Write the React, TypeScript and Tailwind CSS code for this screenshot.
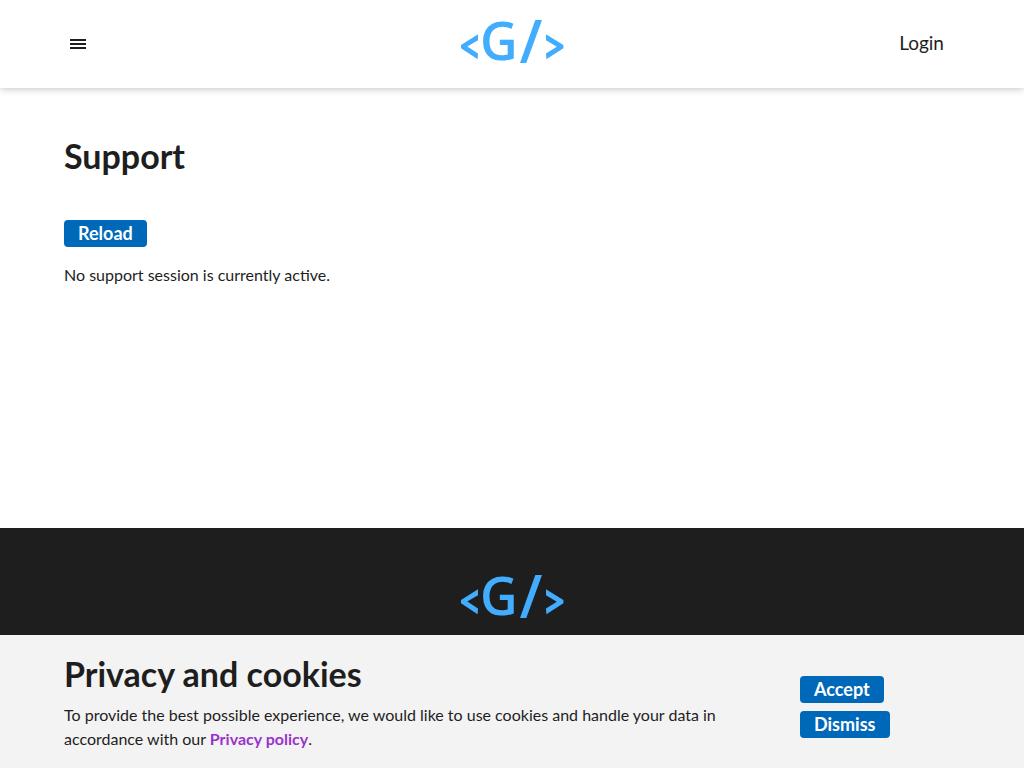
import React from 'react';

function Logo() {
  return (
    <svg width="104" height="44" viewBox="0 0 104 44" role="img" aria-label="Home" className="block overflow-visible fill-[#42adff]">
      <polygon points="18,14.3 18,20.2 7.3,26.5 18,33.4 17.6,39.2 1,28.2 1,25" />
      <text x="20" y="40" fontSize="52" fontWeight="600" fontFamily="'Open Sans', sans-serif">G</text>
      <polygon points="75.3,0 82,0 66.3,43 60,43" />
      <polygon points="86,14.3 86,20.2 96.8,26.7 86,33.4 86.4,39.2 103.4,28.2 103.4,25" />
    </svg>
  );
}

function ActionButton({ children }: { children: React.ReactNode }) {
  return (
    <button type="button" className="rounded bg-[#0068b8] px-3.5 text-lg leading-[27px] font-bold text-white">
      {children}
    </button>
  );
}

export default function App() {
  return (
    <div className="flex min-h-screen flex-col bg-white font-[Lato,sans-serif] text-[#1e1e1e]">
      <header className="grid h-[88px] grid-cols-3 items-center px-16 shadow-[0_0_8px_rgba(0,0,0,0.3)]">
        <button type="button" aria-label="Menu" className="flex h-7 w-7 items-center justify-center">
          <svg width="16" height="10" viewBox="0 0 16 10" fill="currentColor" aria-hidden="true">
            <path d="M0 0h16v2H0zM0 4h16v2H0zM0 8h16v2H0z" />
          </svg>
        </button>
        <a href="#" className="justify-self-center pb-1"><Logo /></a>
        <a href="#login" className="justify-self-end px-4 pb-0.5 text-[19px]">Login</a>
      </header>

      <main className="flex grow flex-col items-start px-16 pt-11">
        <h1 className="mb-10 text-[34px] leading-[48px] font-bold">Support</h1>
        <ActionButton>Reload</ActionButton>
        <p className="mt-4 text-base leading-6">No support session is currently active.</p>
      </main>

      <footer className="flex min-h-60 shrink-0 justify-center bg-[#1e1e1e] pt-[47px]">
        <a href="#" className="self-start"><Logo /></a>
      </footer>

      <section aria-labelledby="cookie-title" className="fixed inset-x-0 bottom-0 flex items-center gap-4 bg-[#f3f3f3] px-16 pt-[15px] pb-[17px]">
        <div className="flex-1">
          <h2 id="cookie-title" className="mb-[5px] text-[34px] leading-[48px] font-bold">Privacy and cookies</h2>
          <p className="text-base leading-6">
            To provide the best possible experience, we would like to use cookies and handle your data in accordance with our{' '}
            <a href="#privacy" className="font-bold text-[#9933cc]">Privacy policy</a>.
          </p>
        </div>
        <div className="flex w-40 flex-col items-start gap-2 pt-3">
          <ActionButton>Accept</ActionButton>
          <ActionButton>Dismiss</ActionButton>
        </div>
      </section>
    </div>
  );
}
